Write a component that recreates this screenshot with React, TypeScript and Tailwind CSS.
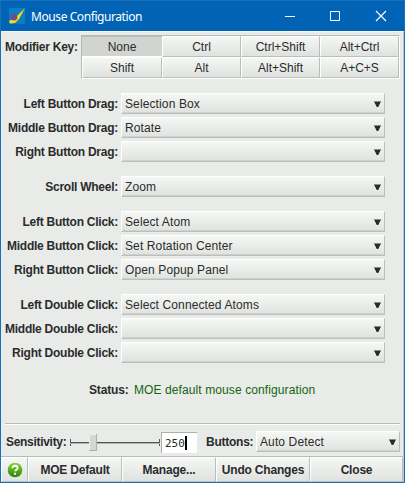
import React from "react";

const raised =
  "border border-t-white border-l-white border-r-[#bcbebb] border-b-[#bcbebb] bg-linear-to-b from-[#f5f7f4] to-[#e0e2df]";

function Arrow() {
  return (
    <svg width="7" height="7" viewBox="0 0 7 7" className="shrink-0" shapeRendering="crispEdges">
      <path d="M0 0h7v1H0z" fill="#8a8c8a" />
      <path d="M1 1h5v2H1zM2 3h3v2H2zM3 5h1v1H3z" fill="#2b2d2b" />
      <path d="M0 1h1v1H0zM6 1h1v1H6zM1 3h1v1H1zM5 3h1v1H5zM2 5h1v1H2zM4 5h1v1H4z" fill="#8a8c8a" />
    </svg>
  );
}

function Select({ value, className = "" }: { value: string; className?: string }) {
  return (
    <div className={`flex h-[21px] items-center justify-between pt-[2px] pr-[3px] pl-[3px] shadow-[inset_0_-1px_0_#d0d2cf] ${raised} ${className}`}>
      <span className="tracking-[0.12px] whitespace-nowrap">{value}</span>
      <Arrow />
    </div>
  );
}

function Row({ label, value }: { label: string; value: string }) {
  return (
    <div className="flex h-[21px] items-center gap-[3px]">
      <span className="w-[117px] pt-[2px] text-right font-bold tracking-[-0.25px] whitespace-nowrap">{label}</span>
      <Select value={value} className="w-[264px]" />
    </div>
  );
}

const groups = [
  [
    ["Left Button Drag:", "Selection Box"],
    ["Middle Button Drag:", "Rotate"],
    ["Right Button Drag:", ""],
  ],
  [["Scroll Wheel:", "Zoom"]],
  [
    ["Left Button Click:", "Select Atom"],
    ["Middle Button Click:", "Set Rotation Center"],
    ["Right Button Click:", "Open Popup Panel"],
  ],
  [
    ["Left Double Click:", "Select Connected Atoms"],
    ["Middle Double Click:", ""],
    ["Right Double Click:", ""],
  ],
];

const keys = ["None", "Ctrl", "Ctrl+Shift", "Alt+Ctrl", "Shift", "Alt", "Alt+Shift", "A+C+S"];

export default function App() {
  return (
    <div className="flex h-[483px] w-[405px] flex-col border border-[#1b6fb9] bg-[#e9ebe8] font-['Liberation_Sans',Arial,sans-serif] text-[12px] leading-[15px] text-[#2b2b2d]">
      <header className="flex h-[30px] shrink-0 items-center bg-[#0063b5] pl-2 text-white">
        <svg width="16" height="16" viewBox="0 0 16 16">
          <rect width="16" height="16" rx="1" fill="#0d7fc0" />
          <path d="M16 0 10 11 6 15 1 15.5 0 13 6 10z" fill="#ffdc12" />
          <circle cx="5" cy="9.3" r="3.3" fill="#6d4f91" />
        </svg>
        <span className="ml-[6px] font-['Noto_Sans','Open_Sans',sans-serif] text-[12px] tracking-[-0.42px] whitespace-nowrap">Mouse Configuration</span>
        <svg className="ml-auto" width="121" height="12" viewBox="0 0 121 12" fill="none" stroke="#fff">
          <path d="M2 6.5h10M47.5 1.5h9v9h-9z" />
          <path d="m93 1 10 10m0-10L93 11" strokeWidth="1.2" />
        </svg>
      </header>
      <main className="flex flex-1 flex-col border-t border-r border-t-[#f8f8f8] border-r-[#b9c6d0]">
        <div className="flex pt-[3px]">
          <span className="mt-[5px] w-[80px] pl-1 font-bold tracking-[-0.25px] whitespace-nowrap">Modifier Key:</span>
          <div className="grid w-[319px] grid-cols-[80px_79px_79px_79px] grid-rows-[21px_21px] border border-t-[#b8bab7] border-r-white border-b-white border-l-[#b8bab7]">
            {keys.map((k, i) => (
              <div
                key={k}
                className={`flex items-center justify-center pt-[2px] ${i === 0 ? "border-t border-b border-t-[#bbbdba] border-b-white bg-[#d2d4d1]" : raised}`}
              >
                {k}
              </div>
            ))}
          </div>
        </div>
        <div className="mt-[14px] flex flex-col gap-[14px]">
          {groups.map((g, i) => (
            <div key={i} className="flex flex-col gap-[3px]">
              {g.map(([label, value]) => (
                <Row key={label} label={label} value={value} />
              ))}
            </div>
          ))}
        </div>
        <div className="mt-5 flex pl-[88px] whitespace-nowrap">
          <span className="w-[45px] font-bold tracking-[-0.15px]">Status:</span>
          <span className="tracking-[0.1px] text-[#116611]">MOE default mouse configuration</span>
        </div>
        <div className="mt-auto mr-[3px] ml-1 h-[2px] border-t border-b border-t-[#b9bbb8] border-b-white" />
        <div className="mt-[6px] flex h-[21px] items-center">
          <span className="w-[69px] pt-[2px] pl-[5px] font-bold tracking-[-0.3px] whitespace-nowrap">Sensitivity:</span>
          <svg width="90" height="21" viewBox="0 0 90 21">
            <path d="M.5 8v7M89.5 8v7" stroke="#555" />
            <path d="M0 11.5h90" stroke="#555" />
            <path d="M0 12.5h90" stroke="#b5b7b4" />
            <rect x="19.5" y="3.5" width="7" height="16" fill="#d5d7d4" stroke="#aeb0ad" />
            <path d="M19.5 19V3.5H26" fill="none" stroke="#eee" />
          </svg>
          <div className="mt-[2px] ml-px flex h-[21px] w-[36px] items-center border-t border-l border-[#aeb0ad] bg-white pl-[3px] font-['DejaVu_Sans_Mono','Liberation_Mono',monospace] text-[11px]">
            250
            <span className="h-[14px] w-[2px] bg-black" />
          </div>
          <span className="ml-[9px] w-[50px] pt-[2px] font-bold tracking-[-0.25px] whitespace-nowrap">Buttons:</span>
          <Select value="Auto Detect" className="w-[144px]" />
        </div>
        <footer className="mt-[4px] flex h-[26px] shrink-0 border-t border-[#b9bbb8] font-bold tracking-[-0.2px]">
          <div className={`flex w-[27px] items-center justify-center ${raised}`}>
            <svg width="16" height="16" viewBox="0 0 16 16">
              <defs>
                <linearGradient id="help" x2="0" y2="1">
                  <stop stopColor="#8bd334" />
                  <stop offset="1" stopColor="#27850c" />
                </linearGradient>
              </defs>
              <circle cx="8" cy="8" r="7.3" fill="url(#help)" />
              <path d="M5.5 6.2c0-3.4 5.1-3 5.1-.2 0 1.7-2.4 1.7-2.4 3.3M8.1 10.8v2" fill="none" stroke="#fff" strokeWidth="1.9" />
            </svg>
          </div>
          <div className={`flex w-[94px] items-center justify-center pt-px ${raised}`}>MOE Default</div>
          <div className={`flex w-[94px] items-center justify-center pt-px ${raised}`}>Manage...</div>
          <div className={`flex w-[94px] items-center justify-center pt-px ${raised}`}>Undo Changes</div>
          <div className={`flex flex-1 items-center justify-center pt-px ${raised}`}>Close</div>
        </footer>
      </main>
    </div>
  );
}
